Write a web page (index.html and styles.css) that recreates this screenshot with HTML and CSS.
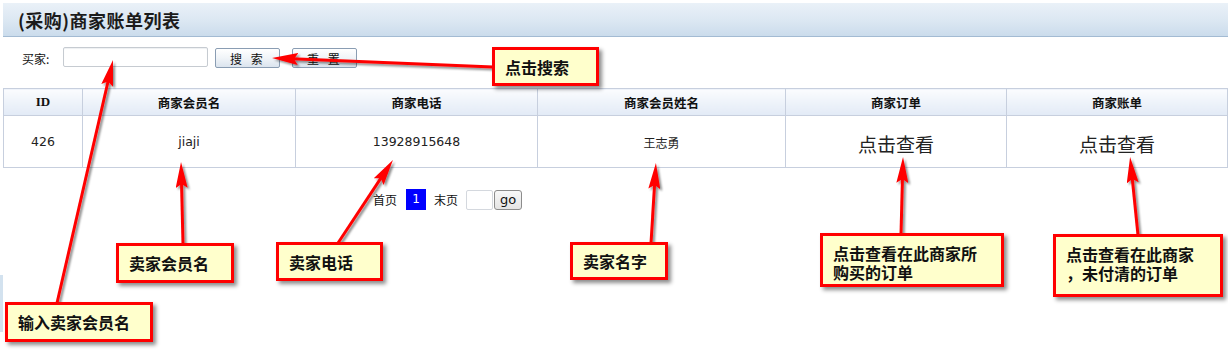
FILE: index.html
```html
<!DOCTYPE html>
<html lang="zh-CN">
<head>
    <meta charset="UTF-8">
    <meta name="viewport" content="width=device-width, initial-scale=1.0">
    <title>(采购)商家账单列表</title>
    <link rel="stylesheet" href="styles.css">
</head>
<body>
    <div class="page">
        <div class="page-head">
            <h2 class="title">(采购)商家账单列表</h2>
        </div>

        <form class="search-bar">
            <label class="search-label" for="buyer">买家:</label>
            <input type="text" id="buyer" class="search-input">
            <button type="button" class="btn">搜 索</button>
            <button type="reset" class="btn btn-reset">重 置</button>
        </form>

        <table class="grid">
            <thead>
                <tr>
                    <th class="col-id">ID</th>
                    <th class="col-user">商家会员名</th>
                    <th class="col-phone">商家电话</th>
                    <th class="col-name">商家会员姓名</th>
                    <th class="col-order">商家订单</th>
                    <th>商家账单</th>
                </tr>
            </thead>
            <tbody>
                <tr>
                    <td>426</td>
                    <td>jiaji</td>
                    <td>13928915648</td>
                    <td class="cell-name">王志勇</td>
                    <td><a class="view-link" href="#">点击查看</a></td>
                    <td><a class="view-link" href="#">点击查看</a></td>
                </tr>
            </tbody>
        </table>

        <div class="pager">
            <a class="pager-link" href="#">首页</a>
            <span class="pager-current">1</span>
            <a class="pager-link" href="#">末页</a>
            <input type="text" class="pager-input">
            <button type="button" class="pager-go">go</button>
        </div>
    </div>

    <!-- annotation layer -->
    <div class="notes">
        <div class="edge-strip"></div>
        <svg class="arrows" width="1228" height="354" viewBox="0 0 1228 354">
            <defs>
                <filter id="shade" x="-20%" y="-20%" width="140%" height="140%">
                    <feDropShadow dx="2" dy="2" stdDeviation="1.2" flood-color="#000" flood-opacity="0.45"/>
                </filter>
                <marker id="head" viewBox="0 0 26 12" refX="6" refY="6" markerWidth="26" markerHeight="12" markerUnits="userSpaceOnUse" orient="auto">
                    <path d="M0,0 L26,6 L0,12 L4,6 Z" fill="#ff0000"/>
                </marker>
            </defs>
            <g filter="url(#shade)" stroke="#ff0000" stroke-width="3" fill="none" marker-end="url(#head)">
                <line x1="493" y1="67" x2="292" y2="58.8"/>
                <line x1="57" y1="303" x2="108.5" y2="79.5"/>
                <line x1="183" y1="244" x2="181.5" y2="182"/>
                <line x1="338" y1="243" x2="381.9" y2="176.6"/>
                <line x1="651" y1="243" x2="654.7" y2="182.9"/>
                <line x1="901" y1="234" x2="902.5" y2="177"/>
                <line x1="1138" y1="235" x2="1132.1" y2="176.9"/>
            </g>
        </svg>

        <div class="note note-search">点击搜索</div>
        <div class="note note-user">卖家会员名</div>
        <div class="note note-phone">卖家电话</div>
        <div class="note note-input">输入卖家会员名</div>
        <div class="note note-name">卖家名字</div>
        <div class="note note-multi note-order">
            <span class="note-line">点击查看在此商家所</span>
            <span class="note-line">购买的订单</span>
        </div>
        <div class="note note-multi note-bill">
            <span class="note-line">点击查看在此商家</span>
            <span class="note-line">，未付清的订单</span>
        </div>
    </div>
</body>
</html>
```

FILE: styles.css
```css
body {
    font-family: "DejaVu Sans", "Noto Sans CJK SC", sans-serif;
    font-size: 12px;
    color: #222;
    background-color: #fff;
    margin: 0;
    padding: 0;
    width: 1228px;
    height: 354px;
    position: relative;
    overflow: hidden;
}

.page {
    padding: 3px 0 0 3px;
}

.page-head {
    height: 33px;
    background: linear-gradient(180deg, #eaf1f8 0%, #dbe7f2 55%, #cbdcec 100%);
    border-bottom: 1px solid #a3bbd3;
    display: flex;
    align-items: center;
    padding-left: 15px;
}

.title {
    margin: 0;
    font-family: "Noto Sans CJK SC", sans-serif;
    font-size: 18px;
    font-weight: bold;
    color: #1b1b1b;
    letter-spacing: 0.5px;
}

.search-bar {
    height: 51px;
    box-sizing: border-box;
    margin: 0;
    padding: 10px 0 0 19px;
    display: flex;
    align-items: flex-start;
}

.search-bar > * {
    flex: none;
}

.search-label {
    font-family: "Noto Sans CJK SC", sans-serif;
    font-size: 12px;
    line-height: 20px;
    margin-top: 2px;
    margin-right: 14px;
    color: #111;
}

.search-input {
    width: 145px;
    height: 20px;
    box-sizing: border-box;
    border: 1px solid #c6cbd1;
    border-radius: 2px;
    box-shadow: inset 0 1px 1px #eef0f2;
    margin: 0 7px 0 0;
    padding: 0 3px;
}

.btn {
    width: 65px;
    height: 20px;
    margin: 1px 12px 0 0;
    padding: 0;
    border: 1px solid #8a9db3;
    border-radius: 2px;
    background: linear-gradient(180deg, #ffffff 0%, #f0f4f8 50%, #dbe4ee 100%);
    font-family: "Noto Sans CJK SC", sans-serif;
    font-size: 12px;
    color: #111;
    letter-spacing: 3px;
    cursor: pointer;
}

.grid {
    width: 1225px;
    border-collapse: collapse;
    table-layout: fixed;
}

.grid th,
.grid td {
    border: 1px solid #c7cfde;
    text-align: center;
    padding: 0;
}

.grid th {
    height: 26px;
    background: linear-gradient(180deg, #fbfcfe 0%, #eef3fa 50%, #e2eaf6 100%);
    font-family: "Noto Sans CJK SC", sans-serif;
    font-size: 12.5px;
    font-weight: bold;
    color: #111;
}

.grid th.col-id {
    font-family: "Liberation Serif", serif;
    font-size: 13px;
}

.col-id { width: 78px; }
.col-user { width: 212px; }
.col-phone { width: 241px; }
.col-name { width: 247px; }
.col-order { width: 220px; }

.grid td {
    height: 49px;
    font-size: 12.5px;
    color: #222;
}

.grid td.cell-name {
    font-family: "Noto Sans CJK SC", sans-serif;
    font-size: 12px;
    padding-top: 2px;
}

.view-link {
    font-family: "Noto Sans CJK SC", sans-serif;
    font-size: 19px;
    color: #222;
    text-decoration: none;
    position: relative;
    top: 2px;
}

.pager {
    margin-top: 21px;
    padding-left: 370px;
    display: flex;
    align-items: center;
    height: 21px;
}

.pager-link {
    font-family: "Noto Sans CJK SC", sans-serif;
    font-size: 12px;
    color: #111;
    text-decoration: none;
}

.pager-current {
    width: 20px;
    height: 21px;
    line-height: 21px;
    margin: 0 8px 0 9px;
    background-color: #0000ff;
    color: #fff;
    text-align: center;
    font-size: 12px;
}

.pager-input {
    width: 27px;
    height: 20px;
    box-sizing: border-box;
    margin: 0 0 0 8px;
    border: 1px solid #d4d8de;
    border-radius: 2px;
    padding: 0;
}

.pager-go {
    width: 28px;
    height: 20px;
    margin: 0 0 0 1px;
    padding: 0;
    border: 1px solid #8c8c8c;
    border-radius: 3px;
    background: linear-gradient(180deg, #f8f8f8 0%, #e4e4e4 100%);
    font-family: "DejaVu Sans", sans-serif;
    font-size: 13px;
    color: #111;
}

/* annotation layer */

.notes {
    position: absolute;
    left: 0;
    top: 0;
    width: 1228px;
    height: 354px;
    pointer-events: none;
}

.arrows {
    position: absolute;
    left: 0;
    top: 0;
}

.edge-strip {
    position: absolute;
    left: 0;
    top: 275px;
    width: 3px;
    height: 57px;
    background-color: #d3e2ef;
}

.note {
    position: absolute;
    box-sizing: border-box;
    background-color: #ffffcc;
    border: 3px solid #ff0000;
    box-shadow: 3px 3px 4px rgba(0, 0, 0, 0.45);
    font-family: "Noto Sans CJK SC", sans-serif;
    font-size: 16px;
    font-weight: bold;
    line-height: 18px;
    color: #111;
    padding: 0 10px;
    display: flex;
    align-items: center;
    white-space: nowrap;
}

.note-multi {
    flex-direction: column;
    align-items: flex-start;
    padding-top: 8px;
}

.note-line {
    display: block;
    line-height: 18px;
}

.note-line + .note-line {
    margin-top: 1px;
}

.note-search { left: 492px; top: 47px; width: 107px; height: 39px; }
.note-user { left: 116px; top: 243px; width: 118px; height: 40px; }
.note-phone { left: 276px; top: 242px; width: 107px; height: 39px; }
.note-input { left: 5px; top: 302px; width: 148px; height: 40px; }
.note-name { left: 570px; top: 242px; width: 98px; height: 38px; }
.note-order { left: 820px; top: 233px; width: 184px; height: 54px; }
.note-bill { left: 1053px; top: 234px; width: 170px; height: 63px; }
```
